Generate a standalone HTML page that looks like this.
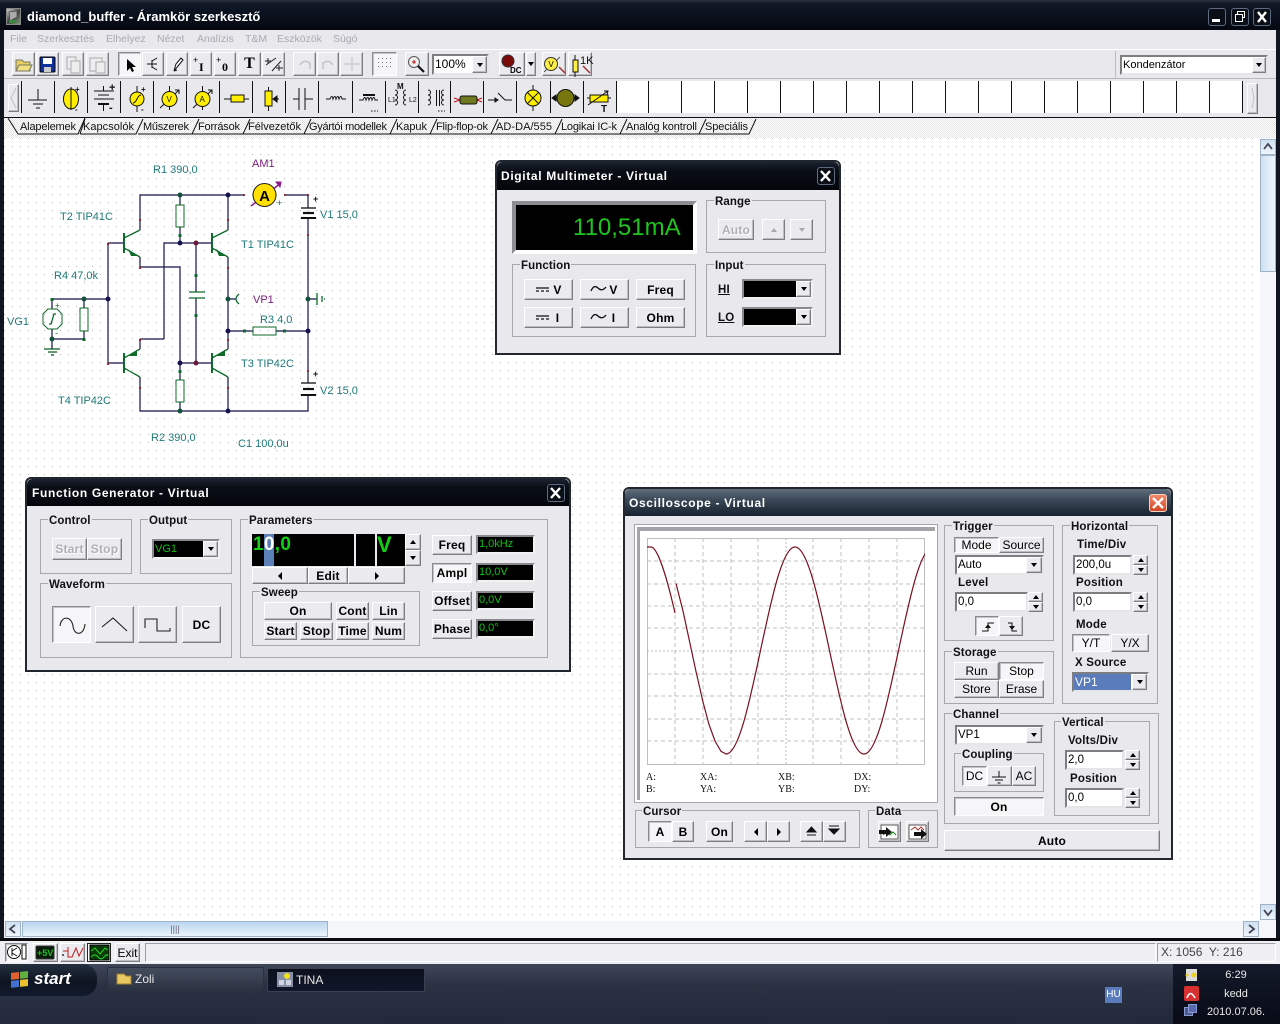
<!DOCTYPE html>
<html><head><meta charset="utf-8"><title>diamond_buffer</title>
<style>
html,body{margin:0;padding:0;background:#000}
#p{position:relative;width:1280px;height:1024px;overflow:hidden;background:#0a0e18;font:11px/14px "Liberation Sans",sans-serif;color:#000}
#p div{position:absolute;box-sizing:border-box}
.b{background:#ebeaef;border:1px solid;border-color:#fff #7e7e82 #7e7e82 #fff;box-shadow:inset -1px -1px 0 #bdbdc2;display:flex;align-items:center;justify-content:center;font-weight:bold;font-size:12px;letter-spacing:.2px;white-space:nowrap}
.n{font-weight:normal;letter-spacing:0}
.d{color:#b0b0b4;text-shadow:1px 1px 0 #fff}
.pr{background:#f6f5f7;border-color:#8a8a8e #fff #fff #8a8a8e;box-shadow:inset 1px 1px 0 #c4c4c8}
.g{border:1px solid #a8a8ac}
.l{font-weight:bold;font-size:11.5px;letter-spacing:.1px;background:#e9e8ed;padding:0 1px;white-space:nowrap;height:14px;color:#111}
.u{font-weight:bold;font-size:11.5px;letter-spacing:.2px;white-space:nowrap;height:14px;color:#111}
.e{background:#fff;border:2px solid;border-color:#7e7e82 #e6e6e8 #e6e6e8 #7e7e82;padding-left:1px;font-size:11.5px;line-height:16px;white-space:nowrap;overflow:hidden}
.k{background:#000;border:2px solid;border-color:#8a8a8e #f2f2f2 #f2f2f2 #8a8a8e;color:#12c012;font-size:11px;line-height:15px;padding-left:1px;white-space:nowrap}
.w{background:#e9e8ed;border:2px solid #22262e;border-radius:6px 6px 0 0}
.h{background:linear-gradient(#1c2330 0,#0a0e16 30%,#04060c 100%);border-radius:5px 5px 0 0}
.tt{color:#fff;font-weight:bold;font-size:12px;letter-spacing:.65px;white-space:nowrap;height:16px;line-height:16px}
.x{border:1px solid #5d6a80;border-radius:3px;background:#0a0e16;color:#fff}
.m{color:#a9a9b0;white-space:nowrap;height:14px;font-size:10.5px}
.tu,.td,.tl,.tr{display:inline-block;width:0;height:0;border-style:solid;border-color:transparent}
.tu{border-width:0 3.5px 4px;border-bottom-color:#000}
.td{border-width:4px 3.5px 0;border-top-color:#000}
.tl{border-width:4px 4px 4px 0;border-right-color:#000}
.tr{border-width:4px 0 4px 4px;border-left-color:#000}
.s{white-space:nowrap;height:14px}
.sb{background:linear-gradient(#cfe0f2,#eef5fc);border:1px solid #9fb3c8}
.sv{background:linear-gradient(90deg,#cfe0f2,#eef5fc);border:1px solid #9fb3c8}
svg{position:absolute;left:0;top:0}
</style></head><body><div id="p">

<!-- title bar -->
<div style="left:0;top:0;width:1280px;height:30px;background:linear-gradient(#2a3242 0,#121824 12%,#0b1220 40%,#050810 100%)"></div>
<div class="tt" style="left:27px;top:9px;font-size:13px;letter-spacing:0">diamond_buffer - Áramkör szerkesztő</div>
<div style="left:6px;top:8px;width:15px;height:17px;background:linear-gradient(135deg,#ccc,#444 50%,#7a9a7a 100%);border:1px solid #888"></div>
<div class="x" style="left:1208px;top:8px;width:18px;height:18px"></div>
<div style="left:1212px;top:19px;width:8px;height:3px;background:#fff"></div>
<div class="x" style="left:1231px;top:8px;width:18px;height:18px"></div>
<div style="left:1237px;top:11px;width:8px;height:7px;border:1px solid #fff"></div>
<div style="left:1235px;top:14px;width:8px;height:8px;border:1px solid #fff;background:#0a0e16"></div>
<div class="x" style="left:1253px;top:8px;width:18px;height:18px"></div>

<!-- menu & toolbars -->
<div style="left:3px;top:30px;width:1273px;height:19px;background:#e9e8ed"></div>
<div style="left:3px;top:49px;width:1273px;height:1px;background:#fff"></div>
<div style="left:3px;top:50px;width:1273px;height:28px;background:#e9e8ed"></div>
<div style="left:3px;top:78px;width:1273px;height:1px;background:#b8b8bc"></div>
<div style="left:3px;top:79px;width:1273px;height:38px;background:#e9e8ed"></div>
<div style="left:1115px;top:51px;width:1px;height:27px;background:#bcbcc0"></div>
<div class="m" style="left:10px;top:32px">File</div>
<div class="m" style="left:37px;top:32px">Szerkesztés</div>
<div class="m" style="left:106px;top:32px">Elhelyez</div>
<div class="m" style="left:157px;top:32px">Nézet</div>
<div class="m" style="left:197px;top:32px">Analízis</div>
<div class="m" style="left:245px;top:32px">T&amp;M</div>
<div class="m" style="left:277px;top:32px">Eszközök</div>
<div class="m" style="left:333px;top:32px">Súgó</div>

<!-- toolbar buttons -->
<div class="b" style="left:12px;top:52px;width:23px;height:24px"></div>
<div class="b" style="left:36px;top:52px;width:23px;height:24px"></div>
<div class="b" style="left:62px;top:52px;width:22px;height:24px"></div>
<div class="b" style="left:86px;top:52px;width:23px;height:24px"></div>
<div class="b pr" style="left:118px;top:52px;width:23px;height:24px"></div>
<div class="b" style="left:142px;top:52px;width:22px;height:24px"></div>
<div class="b" style="left:166px;top:52px;width:22px;height:24px"></div>
<div class="b" style="left:190px;top:52px;width:22px;height:24px"></div>
<div class="b" style="left:214px;top:52px;width:22px;height:24px"></div>
<div class="b" style="left:238px;top:52px;width:23px;height:24px;font:bold 16px 'Liberation Serif',serif">T</div>
<div class="b" style="left:262px;top:52px;width:23px;height:24px"></div>
<div class="b" style="left:293px;top:52px;width:23px;height:24px"></div>
<div class="b" style="left:317px;top:52px;width:22px;height:24px"></div>
<div class="b" style="left:340px;top:52px;width:23px;height:24px"></div>
<div class="b pr" style="left:372px;top:52px;width:25px;height:24px"></div>
<div class="b" style="left:405px;top:52px;width:24px;height:24px"></div>
<div class="e" style="left:432px;top:54px;width:57px;height:21px;line-height:16px;font-size:12px">100%</div>
<div class="b" style="left:472px;top:56px;width:15px;height:17px"><span class="td"></span></div>
<div class="b" style="left:499px;top:52px;width:26px;height:24px"></div>
<div class="b" style="left:526px;top:52px;width:10px;height:24px"><span class="td"></span></div>
<div class="b" style="left:542px;top:52px;width:24px;height:24px"></div>
<div class="b" style="left:568px;top:52px;width:24px;height:24px"></div>
<div class="e" style="left:1120px;top:55px;width:148px;height:20px;padding-left:1px;font-size:11px;line-height:16px">Kondenzátor</div>
<div class="b" style="left:1252px;top:57px;width:14px;height:16px"><span class="td"></span></div>

<!-- component row -->
<div class="b" style="left:8px;top:84px;width:11px;height:28px;color:#aaa;font-weight:normal"></div>
<div style="left:21px;top:81px;width:1221px;height:32px;background:#fff"></div>
<div style="left:21px;top:81px;width:595px;height:32px;background:#e9e8ed"></div>
<div class="b" style="left:1247px;top:83px;width:11px;height:31px"></div>
<div style="left:0;top:117px;width:1280px;height:1px;background:#111"></div>
<div style="left:3px;top:118px;width:1273px;height:20px;background:repeating-conic-gradient(#e4e4e6 0 25%,#fff 0 50%) 0 0/2px 2px"></div>

<!-- canvas -->
<div style="left:4px;top:138px;width:1256px;height:783px;background:#fff"></div>

<svg width="1280" height="1024" viewBox="0 0 1280 1024" font-family="Liberation Sans,sans-serif">
<defs><pattern id="dots" x="4" y="138" width="8" height="8" patternUnits="userSpaceOnUse"><rect width="1" height="1" fill="#b4b4b4"/></pattern></defs>
<rect x="4" y="138" width="1256" height="783" fill="url(#dots)"/>
<!-- tabs -->
<g fill="none" stroke="#111">
<path d="M8 118L18 134H78L85 118"/><path d="M80 134H136L143 119M80 134L85 119"/><path d="M138 134H192L199 119"/><path d="M192 134H243L250 119"/><path d="M243 134H304L311 119"/><path d="M304 134H390L397 119"/><path d="M390 134H430L437 119"/><path d="M430 134H491L498 119"/><path d="M491 134H555L562 119"/><path d="M555 134H620L627 119"/><path d="M620 134H699L706 119"/><path d="M699 134H749L756 119"/>
</g>
<g font-size="11" fill="#111">
<text x="20" y="130" textLength="56">Alapelemek</text><text x="83" y="130" textLength="51">Kapcsolók</text><text x="143" y="130" textLength="46">Műszerek</text><text x="198" y="130" textLength="42">Források</text><text x="248" y="130" textLength="53">Félvezetők</text><text x="309" y="130" textLength="78">Gyártói modellek</text><text x="396" y="130" textLength="31">Kapuk</text><text x="436" y="130" textLength="52">Flip-flop-ok</text><text x="496" y="130" textLength="56">AD-DA/555</text><text x="561" y="130" textLength="56">Logikai IC-k</text><text x="626" y="130" textLength="71">Analóg kontroll</text><text x="705" y="130" textLength="43">Speciális</text>
</g>

<!-- schematic wires -->
<g fill="none" stroke="#14144e" stroke-width="1.2">
<path d="M140 230V195H243M285 195H308V208M308 218V383M308 395V411H140V377"/>
<path d="M180 195V205M180 227V243M164 339V243H212M140 339H164M140 349V339M140 257V267H180V363H212"/>
<path d="M196 243V292M196 298V363"/>
<path d="M228 230V195M228 257V349M228 377V411"/>
<path d="M228 299H236M228 331H253M276 331H308M308 299H317"/>
<path d="M108 243V363M52 299H108M84 299V308M84 331V339M52 339H84M52 299V309M52 329V349"/>
<path d="M108 243H124M108 363H124"/>
<path d="M180 380V363M180 402V411"/>
</g>
<g fill="none" stroke="#0c6a2a" stroke-width="1.3">
<path d="M124 238L140 230M124 248L140 257M212 238L228 230M212 248L228 257M124 358L140 349M124 368L140 377M212 358L228 349M212 368L228 377"/>
<rect x="176" y="205" width="8" height="22" stroke-width="1"/><rect x="176" y="380" width="8" height="22" stroke-width="1"/><rect x="80" y="308" width="8" height="23" stroke-width="1"/><rect x="253" y="327" width="23" height="8" stroke-width="1"/>
<path d="M189 292H205M189 298H205"/>
<path d="M124 233V253M212 233V253M124 353V373M212 353V373" stroke-width="2"/>
<path d="M48 309H57L62 314V324L57 329H48L43 324V314Z" stroke-width="1"/>
<path d="M49 324H51L54 314H56"/>
<path d="M44 349H60M48 352H57M51 355H54" stroke="#0a5a20"/>
<path d="M239 294Q233 299 239 304"/>
<path d="M317 293V305M322 296V302M324 299H325"/>
</g>
<g fill="#0c6a2a"><path d="M128 249L138 256 131 256Z M216 249L226 256 219 256Z M129 356L137 350 137 356Z M217 356L225 350 225 356Z"/></g>
<!-- batteries -->
<g stroke="#111"><path d="M301 208H316" stroke-width="1.3"/><path d="M303 213H314" stroke-width="2.2"/><path d="M301 218H316" stroke-width="2"/><path d="M301 383H316" stroke-width="1.3"/><path d="M303 389H314" stroke-width="2.2"/><path d="M301 395H316" stroke-width="2"/></g>
<!-- ammeter -->
<path d="M251 206L281 183" stroke="#8b1a8b" stroke-width="1.5"/><path d="M276 182L281 182 280 187Z" fill="#8b1a8b" stroke="#8b1a8b"/>
<circle cx="264.500" cy="195" r="11.500" fill="#ffe000" stroke="#222"/>
<text x="264.500" y="201" font-size="15" font-weight="bold" text-anchor="middle">A</text>
<!-- nodes -->
<g fill="#14144e"><circle cx="228" cy="195" r="2.500"/><circle cx="180" cy="243" r="2.500"/><circle cx="108" cy="299" r="2.500"/><circle cx="228" cy="331" r="2.500"/><circle cx="308" cy="331" r="2.500"/><circle cx="180" cy="363" r="2.500"/><circle cx="228" cy="411" r="2.500"/></g>
<g fill="#14503a"><circle cx="180" cy="195" r="2.500"/><circle cx="228" cy="299" r="2.500"/><circle cx="308" cy="299" r="2.500"/><circle cx="84" cy="299" r="2.500"/><circle cx="52" cy="339" r="2.500"/><circle cx="180" cy="411" r="2.500"/></g>
<g fill="#6a1a3a"><circle cx="196" cy="243" r="2.500"/><circle cx="196" cy="363" r="2.500"/></g>
<g fill="#0c6a2a"><rect x="194.500" y="274" width="3" height="3"/><rect x="194.500" y="314" width="3" height="3"/><rect x="178.500" y="234" width="3" height="3"/><rect x="178.500" y="370" width="3" height="3"/><rect x="243" y="329.500" width="3" height="3"/><rect x="283" y="329.500" width="3" height="3"/><rect x="82.500" y="338" width="3" height="3"/><rect x="50.500" y="298" width="3" height="3"/></g>
<g fill="#a02828"><rect x="139" y="219" width="2" height="2"/><rect x="227" y="219" width="2" height="2"/><rect x="107" y="243" width="2" height="2"/><rect x="139" y="267" width="2" height="2"/><rect x="227" y="267" width="2" height="2"/><rect x="139" y="339" width="2" height="2"/><rect x="227" y="339" width="2" height="2"/><rect x="107" y="363" width="2" height="2"/><rect x="139" y="387" width="2" height="2"/><rect x="227" y="387" width="2" height="2"/><rect x="307" y="194" width="2" height="2"/><rect x="307" y="234" width="2" height="2"/><rect x="307" y="370" width="2" height="2"/><rect x="243" y="194" width="2" height="2"/><rect x="284" y="194" width="2" height="2"/></g>
<g font-size="11" fill="#1e7a7a">
<text x="153" y="173">R1 390,0</text><text x="60" y="220">T2 TIP41C</text><text x="54" y="279">R4 47,0k</text><text x="7" y="325">VG1</text><text x="241" y="248">T1 TIP41C</text><text x="260" y="323">R3 4,0</text><text x="241" y="367">T3 TIP42C</text><text x="320" y="218">V1 15,0</text><text x="320" y="394">V2 15,0</text><text x="58" y="404">T4 TIP42C</text><text x="151" y="441">R2 390,0</text><text x="238" y="447">C1 100,0u</text>
</g>
<g font-size="11" fill="#7a1a7a"><text x="252" y="167">AM1</text><text x="253" y="303">VP1</text></g>
<g font-size="9" font-weight="bold" fill="#111"><text x="313" y="202">+</text><text x="313" y="377">+</text></g>
<text x="277" y="206" font-size="9" fill="#0c6a2a">+</text><text x="55" y="308" font-size="8" fill="#0c6a2a">+</text><text x="55" y="336" font-size="9" fill="#0c6a2a">-</text>
</svg>

<!-- scrollbars -->
<div style="left:1260px;top:138px;width:16px;height:783px;background:#f4f6fa"></div>
<div class="sb" style="left:1260px;top:139px;width:16px;height:16px"></div>
<div class="sv" style="left:1260px;top:155px;width:16px;height:117px"></div>
<div class="sb" style="left:1260px;top:904px;width:16px;height:16px"></div>
<div style="left:4px;top:921px;width:1272px;height:17px;background:#f4f6fa"></div>
<div class="sb" style="left:5px;top:921px;width:16px;height:16px"></div>
<div class="sb" style="left:22px;top:921px;width:306px;height:16px;background:linear-gradient(#bcd6f0,#eaf3fc);color:#667;text-align:center;font-size:9px;line-height:14px">||||</div>
<div class="sb" style="left:1243px;top:921px;width:16px;height:16px"></div>

<!-- left/right frame -->
<div style="left:0;top:30px;width:4px;height:908px;background:#111520"></div>
<div style="left:1276px;top:30px;width:4px;height:908px;background:#111520"></div>
<div style="left:0;top:938px;width:1280px;height:3px;background:#0a0c12"></div>

<!-- status row -->
<div style="left:0;top:941px;width:1280px;height:23px;background:#efeef2"></div>
<div class="b pr" style="left:5px;top:943px;width:23px;height:19px"></div>
<div class="b" style="left:33px;top:943px;width:25px;height:19px"></div>
<div class="b" style="left:60px;top:943px;width:25px;height:19px"></div>
<div style="left:87px;top:943px;width:24px;height:19px;background:#fff;border:1px solid #222"></div>
<div class="b n" style="left:115px;top:943px;width:25px;height:19px;font-size:12px">Exit</div>
<div style="left:145px;top:943px;width:1011px;height:19px;border:1px solid;border-color:#a0a0a4 #fff #fff #a0a0a4"></div>
<div style="left:1157px;top:943px;width:119px;height:19px;border:1px solid;border-color:#a0a0a4 #fff #fff #a0a0a4;font-size:12px;line-height:17px;padding-left:3px;color:#444;white-space:nowrap">X: 1056&nbsp; Y: 216</div>

<!-- taskbar -->
<div style="left:0;top:964px;width:1280px;height:60px;background:linear-gradient(#3e4759 0,#2b3243 35%,#22293a 100%)"></div>
<div style="left:0;top:964px;width:97px;height:32px;background:linear-gradient(#24303f,#0e1422 55%,#111a2c);border-radius:0 14px 14px 0"></div>
<div style="left:34px;top:969px;color:#fff;font:italic bold 17px/20px 'Liberation Sans',sans-serif;white-space:nowrap">start</div>
<div style="left:107px;top:967px;width:157px;height:25px;background:linear-gradient(#444d5e,#2a3141);border:1px solid #2a3040;border-radius:2px"></div>
<div class="s" style="left:135px;top:972px;color:#e8e8e8;font-size:12px">Zoli</div>
<div style="left:267px;top:968px;width:158px;height:24px;background:linear-gradient(#0c101c,#10162a);border:1px solid #3a4252;border-radius:2px"></div>
<div class="s" style="left:296px;top:973px;color:#e8e8e8;font-size:12px">TINA</div>
<div style="left:1105px;top:987px;width:17px;height:16px;background:#5a7cbc;color:#fff;font-size:10px;line-height:16px;text-align:center">HU</div>
<div style="left:1173px;top:964px;width:107px;height:60px;background:linear-gradient(#141a2a,#080b16)"></div>
<div class="s" style="left:1200px;top:968px;width:72px;text-align:center;color:#e8e8e8">6:29</div>
<div class="s" style="left:1200px;top:987px;width:72px;text-align:center;color:#e8e8e8">kedd</div>
<div class="s" style="left:1200px;top:1005px;width:72px;text-align:center;color:#e8e8e8">2010.07.06.</div>
<div style="left:1184px;top:986px;width:15px;height:15px;background:#d83030;border-radius:2px"></div>
<div style="left:1184px;top:1007px;width:9px;height:9px;background:#4a5a90;border:1px solid #8a9ad0"></div>
<div style="left:1188px;top:1004px;width:9px;height:9px;background:#5a6ab0;border:1px solid #8a9ad0"></div>

<!-- Digital Multimeter -->
<div class="w" style="left:495px;top:160px;width:346px;height:195px"></div>
<div class="h" style="left:497px;top:162px;width:342px;height:28px"></div>
<div class="tt" style="left:501px;top:168px">Digital Multimeter - Virtual</div>
<div class="x" style="left:817px;top:167px;width:18px;height:18px"></div>
<div style="left:512px;top:201px;width:185px;height:53px;background:#000;border:4px solid;border-color:#8e8e92 #fff #fff #8e8e92"></div>
<div class="s" style="left:573px;top:214px;height:28px;color:#1fc41f;font-size:24px;line-height:28px">110,51mA</div>
<div class="g" style="left:706px;top:200px;width:120px;height:53px"></div><div class="l" style="left:714px;top:195px">Range</div>
<div class="b d" style="left:718px;top:219px;width:36px;height:21px">Auto</div>
<div class="b" style="left:762px;top:219px;width:23px;height:21px"><span class="tu" style="border-bottom-color:#aaa"></span></div>
<div class="b" style="left:790px;top:219px;width:23px;height:21px"><span class="td" style="border-top-color:#aaa"></span></div>
<div class="g" style="left:512px;top:264px;width:184px;height:73px"></div><div class="l" style="left:520px;top:259px">Function</div>
<div class="b" style="left:524px;top:279px;width:49px;height:21px;padding-left:18px">V</div>
<div class="b" style="left:580px;top:279px;width:49px;height:21px;padding-left:18px">V</div>
<div class="b" style="left:636px;top:279px;width:49px;height:21px">Freq</div>
<div class="b" style="left:524px;top:307px;width:49px;height:21px;padding-left:18px">I</div>
<div class="b" style="left:580px;top:307px;width:49px;height:21px;padding-left:18px">I</div>
<div class="b" style="left:636px;top:307px;width:49px;height:21px">Ohm</div>
<div class="g" style="left:706px;top:264px;width:120px;height:73px"></div><div class="l" style="left:714px;top:259px">Input</div>
<div class="u" style="left:718px;top:283px;text-decoration:underline">HI</div>
<div class="u" style="left:718px;top:311px;text-decoration:underline">LO</div>
<div class="k" style="left:742px;top:279px;width:71px;height:20px"></div><div class="b" style="left:796px;top:281px;width:15px;height:16px"><span class="td"></span></div>
<div class="k" style="left:742px;top:307px;width:71px;height:20px"></div><div class="b" style="left:796px;top:309px;width:15px;height:16px"><span class="td"></span></div>

<!-- Function Generator -->
<div class="w" style="left:25px;top:477px;width:546px;height:195px"></div>
<div class="h" style="left:27px;top:479px;width:542px;height:27px"></div>
<div class="tt" style="left:32px;top:485px">Function Generator - Virtual</div>
<div class="x" style="left:547px;top:484px;width:18px;height:18px"></div>
<div class="g" style="left:40px;top:519px;width:92px;height:55px"></div><div class="l" style="left:48px;top:514px">Control</div>
<div class="b d" style="left:52px;top:538px;width:35px;height:22px">Start</div>
<div class="b d" style="left:87px;top:538px;width:35px;height:22px">Stop</div>
<div class="g" style="left:140px;top:519px;width:92px;height:55px"></div><div class="l" style="left:148px;top:514px">Output</div>
<div class="k" style="left:152px;top:539px;width:68px;height:20px;color:#12c012;line-height:17px">VG1</div><div class="b" style="left:203px;top:541px;width:15px;height:16px"><span class="td"></span></div>
<div class="g" style="left:40px;top:583px;width:192px;height:75px"></div><div class="l" style="left:48px;top:578px">Waveform</div>
<div class="b pr" style="left:52px;top:606px;width:39px;height:37px"></div>
<div class="b" style="left:95px;top:606px;width:39px;height:37px"></div>
<div class="b" style="left:138px;top:606px;width:39px;height:37px"></div>
<div class="b" style="left:182px;top:606px;width:39px;height:37px">DC</div>
<div class="g" style="left:240px;top:519px;width:308px;height:139px"></div><div class="l" style="left:248px;top:514px">Parameters</div>
<div style="left:252px;top:534px;width:102px;height:32px;background:#000"></div>
<div style="left:264px;top:534px;width:10px;height:32px;background:#5b80b8"></div>
<div style="left:356px;top:534px;width:19px;height:32px;background:#000"></div>
<div style="left:377px;top:534px;width:28px;height:32px;background:#000"></div>
<div class="s" style="left:253px;top:533px;height:24px;line-height:24px;color:#12d012;font-size:19px;font-weight:bold;letter-spacing:.3px">1<span style="color:#fff">0</span>,0</div>
<div class="s" style="left:377px;top:532px;height:26px;line-height:26px;color:#12d012;font-size:22px;font-weight:bold">V</div>
<div class="b" style="left:405px;top:534px;width:16px;height:16px"><span class="tu"></span></div>
<div class="b" style="left:405px;top:550px;width:16px;height:16px"><span class="td"></span></div>
<div class="b" style="left:252px;top:567px;width:56px;height:17px"><span class="tl"></span></div>
<div class="b" style="left:308px;top:567px;width:40px;height:17px">Edit</div>
<div class="b" style="left:348px;top:567px;width:57px;height:17px"><span class="tr"></span></div>
<div class="g" style="left:252px;top:591px;width:168px;height:55px"></div><div class="l" style="left:260px;top:586px">Sweep</div>
<div class="b" style="left:264px;top:602px;width:68px;height:18px">On</div>
<div class="b" style="left:336px;top:602px;width:33px;height:18px">Cont</div>
<div class="b" style="left:372px;top:602px;width:33px;height:18px">Lin</div>
<div class="b" style="left:264px;top:622px;width:33px;height:18px">Start</div>
<div class="b" style="left:300px;top:622px;width:33px;height:18px">Stop</div>
<div class="b" style="left:336px;top:622px;width:33px;height:18px">Time</div>
<div class="b" style="left:372px;top:622px;width:33px;height:18px">Num</div>
<div class="b" style="left:432px;top:535px;width:40px;height:20px">Freq</div>
<div class="b pr" style="left:432px;top:563px;width:40px;height:20px">Ampl</div>
<div class="b" style="left:432px;top:591px;width:40px;height:20px">Offset</div>
<div class="b" style="left:432px;top:619px;width:40px;height:20px">Phase</div>
<div class="k" style="left:476px;top:535px;width:59px;height:19px">1,0kHz</div>
<div class="k" style="left:476px;top:563px;width:59px;height:19px">10,0V</div>
<div class="k" style="left:476px;top:591px;width:59px;height:19px">0,0V</div>
<div class="k" style="left:476px;top:619px;width:59px;height:19px">0,0°</div>

<!-- Oscilloscope -->
<div class="w" style="left:623px;top:487px;width:550px;height:373px"></div>
<div style="left:625px;top:489px;width:546px;height:27px;border-radius:5px 5px 0 0;background:linear-gradient(#5f6d7c 0,#3a4858 40%,#18222f 100%)"></div>
<div class="tt" style="left:629px;top:495px">Oscilloscope - Virtual</div>
<div style="left:1149px;top:494px;width:18px;height:18px;background:linear-gradient(#f08868,#d44828);border:1px solid #f4d0c0;border-radius:3px"></div>
<div class="g" style="left:634px;top:524px;width:304px;height:279px;background:#fff"></div>
<div style="left:637px;top:527px;width:298px;height:273px;background:#fff;border-left:3px solid #a4a4a8;border-top:4px solid #a4a4a8"></div>
<div class="g" style="left:635px;top:810px;width:225px;height:38px"></div><div class="l" style="left:642px;top:805px">Cursor</div>
<div class="b pr" style="left:648px;top:821px;width:24px;height:21px">A</div>
<div class="b" style="left:672px;top:821px;width:22px;height:21px">B</div>
<div class="b" style="left:706px;top:821px;width:27px;height:21px">On</div>
<div class="b" style="left:744px;top:821px;width:23px;height:21px"><span class="tl"></span></div>
<div class="b" style="left:767px;top:821px;width:23px;height:21px"><span class="tr"></span></div>
<div class="b" style="left:800px;top:821px;width:23px;height:21px"></div>
<div class="b" style="left:823px;top:821px;width:23px;height:21px"></div>
<div class="g" style="left:868px;top:810px;width:70px;height:38px"></div><div class="l" style="left:875px;top:805px">Data</div>
<div class="b" style="left:878px;top:821px;width:23px;height:21px"></div>
<div class="b" style="left:906px;top:821px;width:23px;height:21px"></div>

<div class="g" style="left:944px;top:525px;width:110px;height:116px"></div><div class="l" style="left:952px;top:520px">Trigger</div>
<div class="b n pr" style="left:954px;top:537px;width:45px;height:16px">Mode</div>
<div class="b n" style="left:999px;top:537px;width:45px;height:16px">Source</div>
<div class="e" style="left:955px;top:555px;width:89px;height:20px">Auto</div><div class="b" style="left:1026px;top:557px;width:16px;height:16px"><span class="td"></span></div>
<div class="u" style="left:958px;top:576px">Level</div>
<div class="e" style="left:955px;top:592px;width:73px;height:20px">0,0</div>
<div class="b" style="left:1028px;top:592px;width:15px;height:10px"><span class="tu"></span></div><div class="b" style="left:1028px;top:602px;width:15px;height:10px"><span class="td"></span></div>
<div class="b pr" style="left:975px;top:616px;width:24px;height:20px"></div>
<div class="b" style="left:999px;top:616px;width:24px;height:20px"></div>

<div class="g" style="left:944px;top:651px;width:110px;height:53px"></div><div class="l" style="left:952px;top:646px">Storage</div>
<div class="b n" style="left:954px;top:662px;width:45px;height:18px;font-size:12px">Run</div>
<div class="b n pr" style="left:999px;top:662px;width:45px;height:18px;font-size:12px">Stop</div>
<div class="b n" style="left:954px;top:680px;width:45px;height:18px;font-size:12px">Store</div>
<div class="b n" style="left:999px;top:680px;width:45px;height:18px;font-size:12px">Erase</div>

<div class="g" style="left:1062px;top:525px;width:96px;height:179px"></div><div class="l" style="left:1070px;top:520px">Horizontal</div>
<div class="u" style="left:1077px;top:538px">Time/Div</div>
<div class="e" style="left:1073px;top:555px;width:59px;height:20px">200,0u</div>
<div class="b" style="left:1133px;top:555px;width:15px;height:10px"><span class="tu"></span></div><div class="b" style="left:1133px;top:565px;width:15px;height:10px"><span class="td"></span></div>
<div class="u" style="left:1076px;top:576px">Position</div>
<div class="e" style="left:1073px;top:592px;width:59px;height:20px">0,0</div>
<div class="b" style="left:1133px;top:592px;width:15px;height:10px"><span class="tu"></span></div><div class="b" style="left:1133px;top:602px;width:15px;height:10px"><span class="td"></span></div>
<div class="u" style="left:1076px;top:618px">Mode</div>
<div class="b n pr" style="left:1072px;top:634px;width:38px;height:18px;font-size:12px">Y/T</div>
<div class="b n" style="left:1111px;top:634px;width:38px;height:18px;font-size:12px">Y/X</div>
<div class="u" style="left:1075px;top:656px">X Source</div>
<div class="e" style="left:1072px;top:672px;width:77px;height:20px;color:#fff"></div>
<div class="s" style="left:1074px;top:674px;width:57px;height:16px;background:#5a7cbc;color:#fff;font-size:12px;line-height:16px;padding-left:1px">VP1</div>
<div class="b" style="left:1132px;top:674px;width:15px;height:16px"><span class="td"></span></div>

<div class="g" style="left:944px;top:713px;width:215px;height:111px"></div><div class="l" style="left:952px;top:708px">Channel</div>
<div class="e" style="left:955px;top:725px;width:89px;height:20px">VP1</div><div class="b" style="left:1026px;top:727px;width:16px;height:16px"><span class="td"></span></div>
<div class="g" style="left:954px;top:753px;width:90px;height:39px"></div><div class="l" style="left:961px;top:748px">Coupling</div>
<div class="b n pr" style="left:962px;top:766px;width:25px;height:20px;font-size:12px">DC</div>
<div class="b" style="left:987px;top:766px;width:25px;height:20px"></div>
<div class="b n" style="left:1012px;top:766px;width:24px;height:20px;font-size:12px">AC</div>
<div class="b pr" style="left:954px;top:797px;width:90px;height:19px">On</div>
<div class="g" style="left:1054px;top:721px;width:96px;height:95px"></div><div class="l" style="left:1061px;top:716px">Vertical</div>
<div class="u" style="left:1068px;top:734px">Volts/Div</div>
<div class="e" style="left:1065px;top:750px;width:59px;height:20px">2,0</div>
<div class="b" style="left:1125px;top:750px;width:15px;height:10px"><span class="tu"></span></div><div class="b" style="left:1125px;top:760px;width:15px;height:10px"><span class="td"></span></div>
<div class="u" style="left:1070px;top:772px">Position</div>
<div class="e" style="left:1065px;top:788px;width:59px;height:20px">0,0</div>
<div class="b" style="left:1125px;top:788px;width:15px;height:10px"><span class="tu"></span></div><div class="b" style="left:1125px;top:798px;width:15px;height:10px"><span class="td"></span></div>
<div class="b" style="left:944px;top:830px;width:216px;height:21px">Auto</div>

<!-- scope plot -->
<svg style="left:647px;top:538px" width="278" height="227" viewBox="647 538 278 227">
<rect x="647.500" y="538.500" width="277" height="226" fill="#fff" stroke="#bdbdbd"/>
<g stroke="#c0c0c0" stroke-dasharray="4 3" fill="none">
<path d="M675 538V764M703 538V764M731 538V764M758 538V764M813 538V764M841 538V764M869 538V764M897 538V764"/>
<path d="M647 561H925M647 584H925M647 606H925M647 628H925M647 674H925M647 696H925M647 719H925M647 741H925"/>
</g>
<g stroke="#b8b8b8" stroke-dasharray="2 2" fill="none"><path d="M786 538V764M647 651H925"/></g>
<path d="M647 547H651C656 547 664 565 675 613" fill="none" stroke="#7a1020" stroke-width="1.2"/>
<path d="M676 583.500L683 611 690 643.500 696 671.500 703 702 709 724.500 715 741 721 751.300 726 754C751 754 770 547 795 547C820 547 839 754 864 754C889 754 908 547 933 547" fill="none" stroke="#7a1020" stroke-width="1.2"/>
</svg>

<!-- overlay icons and labels -->
<svg width="1280" height="1024" viewBox="0 0 1280 1024" font-family="Liberation Sans,sans-serif">
<!-- close X -->
<g stroke="#fff" stroke-width="2.400" fill="none"><path d="M1258 12L1266 22M1266 12L1258 22M821 171L830 181M830 171L821 181M551 488L560 498M560 488L551 498M1153 498L1163 508M1163 498L1153 508"/></g>
<!-- scrollbar chevrons -->
<g stroke="#445" stroke-width="1.800" fill="none"><path d="M15 925L10 929 15 933M1249 925L1254 929 1249 933M1264 149L1268 144 1272 149M1264 910L1268 915 1272 910"/></g>
<!-- app icon -->
<path d="M9 12L17 11 17 17 10 21Z" fill="#aaa" stroke="#333" stroke-width=".6"/><rect x="9" y="20" width="7" height="3" fill="#3a8a3a"/>
<!-- scope cursor text -->
<g font-family="Liberation Serif,serif" font-size="10" fill="#111">
<text x="646" y="780">A:</text><text x="646" y="792">B:</text><text x="700" y="780">XA:</text><text x="700" y="792">YA:</text><text x="778" y="780">XB:</text><text x="778" y="792">YB:</text><text x="854" y="780">DX:</text><text x="854" y="792">DY:</text>
</g>
<!-- toolbar row 1 -->
<path d="M16 60H22L24 62H30V71H16Z" fill="#e8d060" stroke="#776"/><path d="M16 71L19 65H32L29 71Z" fill="#f0e080" stroke="#776"/>
<rect x="40" y="57" width="15" height="15" rx="1" fill="#1030a0" stroke="#000"/><rect x="43" y="58" width="9" height="6" fill="#fff"/><rect x="44" y="67" width="7" height="5" fill="#ccc"/>
<g fill="#eee" stroke="#aaa"><rect x="67" y="57" width="9" height="12"/><rect x="71" y="61" width="9" height="12"/><rect x="90" y="58" width="12" height="13"/><rect x="96" y="62" width="9" height="11"/></g>
<path d="M127 59L127 71 130 68 132 72 134 71 132 67 136 67Z" fill="#000"/>
<path d="M147 64H152M152 60V68M152 61L157 58M152 67L157 70M150 64L157 64" stroke="#111" fill="none"/>
<path d="M174 71L176 64 181 58 183 60 178 66ZM174 71L177 70" fill="#fff" stroke="#111"/>
<text x="193" y="63" font-size="9">+</text><text x="199" y="71" font-size="12" font-family="Liberation Serif,serif" font-weight="bold">I</text>
<text x="216" y="63" font-size="9">+</text><text x="222" y="71" font-size="12" font-family="Liberation Serif,serif" font-weight="bold">0</text>
<path d="M266 65L276 58M265 61H271M268 58V64M272 71L281 61M276 68H283M279 65V71" stroke="#222" fill="none"/>
<path d="M300 65Q304 59 310 63L310 69" stroke="#c4c4c8" fill="none" stroke-width="1.500"/><path d="M333 65Q329 59 323 63L323 69" stroke="#c4c4c8" fill="none" stroke-width="1.500"/><path d="M344 64H360M352 57V71" stroke="#c0c0c4"/>
<g fill="#777"><rect x="378" y="58" width="1" height="1"/><rect x="382" y="58" width="1" height="1"/><rect x="386" y="58" width="1" height="1"/><rect x="390" y="58" width="1" height="1"/><rect x="378" y="62" width="1" height="1"/><rect x="382" y="62" width="1" height="1"/><rect x="386" y="62" width="1" height="1"/><rect x="390" y="62" width="1" height="1"/><rect x="378" y="66" width="1" height="1"/><rect x="382" y="66" width="1" height="1"/><rect x="386" y="66" width="1" height="1"/><rect x="390" y="66" width="1" height="1"/></g>
<circle cx="414" cy="62" r="5.500" fill="#f0f0f0" stroke="#555"/><path d="M418 66L424 72" stroke="#111" stroke-width="2.200"/><path d="M412 62H416M414 60V64" stroke="#c01010"/>
<circle cx="508" cy="61" r="6" fill="#7a0a0a" stroke="#333"/><text x="510" y="73" font-size="8" font-weight="bold">DC</text>
<path d="M544 72L560 57" stroke="#555"/><circle cx="551" cy="64" r="6.500" fill="#ffee44" stroke="#333"/><text x="551" y="67" font-size="8" text-anchor="middle">V</text><path d="M565 73L559 67" stroke="#a03030" stroke-width="1.500"/>
<path d="M575 55V77" stroke="#111"/><rect x="573" y="60" width="5" height="12" fill="#ffee44" stroke="#111"/><text x="580" y="64" font-size="11" fill="#111">1K</text><path d="M590 73L583 66" stroke="#a03030" stroke-width="1.500"/>

<!-- component row dividers -->
<g stroke="#111"><path d="M21.500 81V113M54.500 81V113M87.500 81V113M120.500 81V113M153.500 81V113M186.500 81V113M219.500 81V113M252.500 81V113M285.500 81V113M318.500 81V113M352.500 81V113M385.500 81V113M418.500 81V113M450.500 81V113M483.500 81V113M516.500 81V113M550.500 81V113M583.500 81V113M616.500 81V113M648.500 81V113M681.500 81V113M714.500 81V113M747.500 81V113M780.500 81V113M813.500 81V113M846.500 81V113M879.500 81V113M912.500 81V113M945.500 81V113M978.500 81V113M1011.500 81V113M1044.500 81V113M1077.500 81V113M1110.500 81V113M1143.500 81V113M1176.500 81V113M1209.500 81V113M1242.500 81V113"/></g>
<path d="M16 88L11 98 16 108M1252 88L1254 98 1252 108" stroke="#c0c0c4" fill="none"/>
<!-- component icons -->
<g stroke="#111" fill="none">
<path d="M38 89V100M28 100H47M33 104H43M36 108H40"/>
<ellipse cx="71" cy="99" rx="7.500" ry="10" fill="#ffee00"/><path d="M71 87V110"/>
<path d="M103.500 86V91M94 91H114M98 95H109M94 99H114M103.500 104V111" /><path d="M98 104H109" stroke-width="2"/>
<circle cx="137" cy="99" r="7" fill="#ffee00"/><path d="M137 86V92M137 106V112M133 103Q135 103 137 99T141 95"/>
<path d="M160 108L179 90"/><path d="M175 90L179 90 179 94" /><circle cx="169.500" cy="99" r="7.500" fill="#ffee00"/><path d="M169.500 86V91.500M169.500 106.500V110"/>
<path d="M193 108L212 90"/><path d="M208 90L212 90 212 94"/><circle cx="202.500" cy="99" r="7.500" fill="#ffee00"/><path d="M202.500 86V91.500M202.500 106.500V110"/>
<path d="M224 99H231M244 99H249"/><rect x="231" y="95" width="13" height="7" fill="#ffee00"/>
<path d="M268.500 87V91M268.500 106V111M279 99H273"/><rect x="265" y="91" width="7" height="15" fill="#ffee00"/><path d="M273 99L277 96V102Z" fill="#111"/>
<path d="M293 99H299M305 99H313M299 88V110M305 88V110"/>
<path d="M326 99H330Q332 94 333 99Q335 94 336 99Q338 94 339 99Q341 94 342 99H346"/>
<path d="M359 100H363Q365 95 366 100Q368 95 369 100Q371 95 372 100Q374 95 375 100H378"/><path d="M363 95H375" stroke-width="2"/><path d="M371 111H378" stroke-dasharray="1.500 1.500"/>
<path d="M395 90a2.500 2.500 0 0 1 0 5a2.500 2.500 0 0 1 0 5a2.500 2.500 0 0 1 0 5M406 90a2.500 2.500 0 0 0 0 5a2.500 2.500 0 0 0 0 5a2.500 2.500 0 0 0 0 5"/>
<path d="M428 90a2.500 2.500 0 0 1 0 5a2.500 2.500 0 0 1 0 5a2.500 2.500 0 0 1 0 5M436.500 90V106M439.500 90V106M444 90a2.500 2.500 0 0 0 0 5a2.500 2.500 0 0 0 0 5a2.500 2.500 0 0 0 0 5"/><path d="M438 111H445" stroke-dasharray="1.500 1.500"/>
<path d="M454 98L460 100M477 100L482 98M454 102L460 100M477 100L482 102" stroke="#c01020"/><rect x="460" y="96" width="17" height="8" rx="2" fill="#6f7a20"/>
<path d="M488 100H496M498 93L505 100M505 100H512"/><path d="M495 98L498 100 495 102Z" fill="#111"/>
<path d="M533 85V90M533 106V111"/><circle cx="533" cy="98" r="8" fill="#ffee00"/><path d="M527.500 92.500L538.500 103.500M538.500 92.500L527.500 103.500"/>
<path d="M553 98H558M574 98H578"/><circle cx="565.500" cy="98" r="8.500" fill="#77770e"/><path d="M556 95V101L552 98ZM575 95V101L579 98Z" fill="#111"/>
<path d="M587 98H611"/><rect x="590" y="95" width="18" height="7" fill="#ffee00"/><path d="M588 105L608 91"/><path d="M604 91L608 91 607 95"/>
</g>
<g font-size="8" font-weight="bold" fill="#111"><text x="75" y="92">+</text><text x="75" y="112">-</text><text x="109" y="91" font-size="11">+</text><text x="109" y="111" font-size="11">-</text><text x="141" y="92">+</text><text x="141" y="112">-</text><text x="166.500" y="102" font-weight="normal">V</text><text x="199.500" y="102" font-weight="normal">A</text><text x="397" y="89">M</text><text x="388" y="102" font-size="7" font-weight="normal">L1</text><text x="409" y="102" font-size="7" font-weight="normal">L2</text><text x="601" y="112" font-size="10">T</text></g>
<!-- multimeter glyphs -->
<g stroke="#111" fill="none" stroke-width="1.300">
<path d="M536 288H549M591 291Q594 284 598 288T606 287M591 319Q594 312 598 316T606 315M536 316H549"/>
<path d="M536 291H549M536 319H549" stroke-dasharray="3 2"/>
</g>
<!-- fg waves -->
<g fill="none" stroke="#222" stroke-width="1.100"><path d="M60 626C61 616 71 615 73 626C74 636 84 636 85 624"/><path d="M102 627L113 618 127 631"/><path d="M145 628V619H157V631H170V628"/></g>
<!-- scope small glyphs -->
<path d="M807 832L811.500 827 816 832ZM807 835H816M829 826H839M829 829L834 834 839 829Z" fill="#111" stroke="#111"/>
<g stroke="#111" fill="none"><path d="M982 631H988V623H994"/><path d="M1008 623H1012V631H1017"/></g>
<path d="M985 628L991 628 988 624ZM1009 626L1015 626 1012 630Z" fill="#111"/>
<path d="M992 777H1006M995 780H1003M997.500 783H1000.500M999 771V777" stroke="#111" fill="none"/>
<rect x="881" y="825" width="17" height="14" fill="#fff" stroke="#555"/><path d="M883 835L887 832 890 835 893 832 896 835" stroke="#0a8a0a" fill="none"/><path d="M879 830H886V827L892 832 886 837V834H879Z" fill="#111"/>
<rect x="909" y="825" width="17" height="14" fill="#fff" stroke="#555"/><path d="M911 830L915 827 918 830 921 827 924 830" stroke="#b03030" fill="none"/><path d="M914 832H921V829L927 834 921 839V836H914Z" fill="#111"/>
<!-- status icons -->
<circle cx="14" cy="952" r="6.500" fill="#fff" stroke="#111"/><path d="M12 948V956M12 951L17 948M12 953L17 956" stroke="#111" fill="none"/><rect x="22" y="945" width="4" height="14" fill="#fff" stroke="#111"/>
<rect x="36" y="946" width="18" height="13" rx="1" fill="#0a1a0a" stroke="#333"/><text x="37" y="956" font-size="9" font-weight="bold" fill="#1fc41f">+5V</text>
<path d="M63 951H68M68 947V957H72L76 948 79 956 83 948" stroke="#c02020" fill="none"/><circle cx="63" cy="955" r="1" fill="#333"/>
<rect x="90" y="945" width="19" height="15" fill="#0a3a0a" stroke="#000"/><path d="M91 951L95 948 100 954 105 948 108 950" stroke="#1fe01f" fill="none"/><path d="M91 957Q95 953 98 957T104 957T108 956" stroke="#1fe01f" fill="none"/>
<!-- taskbar icons -->
<g transform="skewY(-6) translate(0 1)"><rect x="11" y="973" width="8" height="7" fill="#e06030"/><rect x="20" y="973" width="8" height="7" fill="#60b040"/><rect x="11" y="981" width="8" height="7" fill="#4070d0"/><rect x="20" y="981" width="8" height="7" fill="#e8c030"/></g>
<path d="M117 974H124L126 976H131V984H117Z" fill="#e8c860" stroke="#a08030"/>
<rect x="277" y="972" width="16" height="15" fill="#8890a8"/><circle cx="287" cy="976" r="3" fill="#f0e020"/><rect x="279" y="980" width="5" height="5" fill="#d0d4e0"/><rect x="286" y="980" width="5" height="5" fill="#d0d4e0"/>
<rect x="1186" y="969" width="11" height="12" fill="#dcdcdc"/><circle cx="1194" cy="975" r="2.500" fill="#ecd020"/><circle cx="1187" cy="975" r="1.500" fill="#ecd020"/>
<path d="M1187 998Q1190 989 1195 998" stroke="#fff" stroke-width="1.600" fill="none"/>
</svg>
</div></body></html>
